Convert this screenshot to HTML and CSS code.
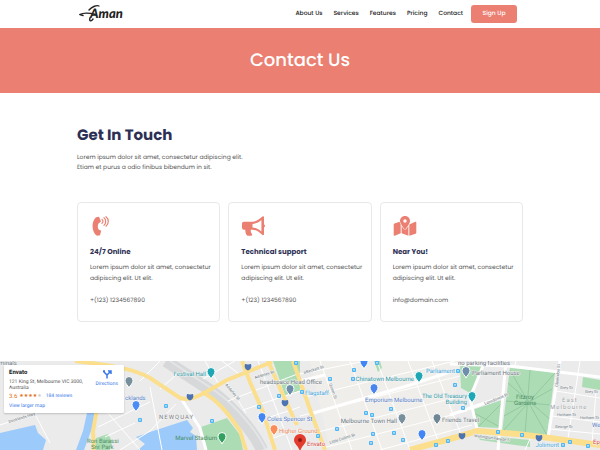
FILE: index.html
```html
<!DOCTYPE html>
<html lang="en">
<head>
    <meta charset="UTF-8">
    <meta name="viewport" content="width=device-width, initial-scale=1.0">
    <title>Contact Us</title>
    <link rel="stylesheet" href="styles.css">
</head>
<body>

<header class="site-header">
    <div class="container header-inner">
        <a class="logo" href="#">
            <svg width="46" height="20" viewBox="0 0 46 20" role="img" aria-label="Aman">
                <path d="M1 10.500C5 8 11 9 17 10.500" />
                <path d="M1 10.500 4 11.500" />
                <path d="M10 6C13 2.500 18 .8 20 2" />
                <path d="M11 14C10 17 12 18 14 15" />
                <text x="11" y="14">Aman</text>
            </svg>
        </a>
        <nav class="nav">
            <a href="#">About Us</a>
            <a href="#">Services</a>
            <a href="#">Features</a>
            <a href="#">Pricing</a>
            <a href="#">Contact</a>
        </nav>
        <button class="signup" type="button">Sign Up</button>
    </div>
</header>

<section class="banner">
    <h1>Contact Us</h1>
</section>

<main class="container content">
    <h2>Get In Touch</h2>
    <p class="intro">Lorem ipsum dolor sit amet, consectetur adipiscing elit.<br>Etiam et purus a odio finibus bibendum in sit.</p>

    <div class="cards">
        <article class="card">
            <svg class="icon" viewBox="0 0 24 20">
                <path d="M6 1.200 9 .8 11 5.500 8.500 7.500C7.500 9.500 7.600 11.500 8.600 13.400L11.200 14.800 10 19.200 7 19.800C1.500 16 1 5.500 6 1.200Z" />
                <path class="line" d="M12 3.500C13.300 4.300 13.300 6.300 12 7.300M14 1.700C16.200 3.200 16.200 7.500 14 9.200M16 .7C19 3 19 7.800 16 10.200" />
            </svg>
            <h3>24/7 Online</h3>
            <p>Lorem ipsum dolor sit amet, consectetur adipiscing elit. Ut elit.</p>
            <p>+(123) 1234567890</p>
        </article>
        <article class="card">
            <svg class="icon" viewBox="0 0 24 20">
                <path fill-rule="evenodd" d="M23 8.200V1.200C23 .3 22 .1 21.500 .5L17.500 3.600C15.700 5 13.500 5.700 11.300 5.700H3C1.800 5.700 1 6.600 1 7.700V11.700C1 12.900 1.900 13.700 3 13.700H4.300C4.200 15.600 4.600 17.500 5.600 19.100C5.900 19.600 6.300 19.800 6.800 19.800H10C11 19.800 11.400 18.700 10.900 18C9.800 16.700 9.500 15.200 9.900 13.700H11.300C13.500 13.700 15.700 14.400 17.500 15.800L21.500 19C22 19.400 23 19.100 23 18.300V11.400C24.300 10.600 24.300 9 23 8.200ZM20.400 15.500 19.200 14.500C17 12.700 14.200 11.700 11.500 11.600V7.900C14.200 7.800 17 6.700 19.200 5L20.400 4Z" />
            </svg>
            <h3>Technical support</h3>
            <p>Lorem ipsum dolor sit amet, consectetur adipiscing elit. Ut elit.</p>
            <p>+(123) 1234567890</p>
        </article>
        <article class="card">
            <svg class="icon" viewBox="0 0 24 20">
                <path fill-rule="evenodd" d="M12 0C14.900 0 17 2.200 17 5C17 7.300 14 11.200 12.600 12.900C12.300 13.300 11.700 13.300 11.400 12.900C10 11.200 7 7.300 7 5C7 2.200 9.100 0 12 0ZM12 3.300A1.700 1.700 0 1 0 12 6.700A1.700 1.700 0 1 0 12 3.300Z" />
                <path d="M.7 8.600C.7 8.200 1 7.800 1.400 7.600L6.600 5.700C6.800 6.600 7.200 7.600 7.700 8.500V17.200L1.700 19.700C1.200 19.900 .7 19.700 .7 19.100ZM8.600 10.100 10.500 12.800C11.300 13.900 12.700 13.900 13.500 12.800L15.400 10.100V19.700L8.600 17.300ZM22.300 5.700C22.800 5.500 23.300 5.800 23.300 6.300V16.800C23.300 17.200 23 17.600 22.600 17.800L16.300 19.800V8.500Z" />
            </svg>
            <h3>Near You!</h3>
            <p>Lorem ipsum dolor sit amet, consectetur adipiscing elit. Ut elit.</p>
            <p>info@domain.com</p>
        </article>
    </div>
</main>

<section class="map" aria-label="Map">
    <svg class="map-canvas" viewBox="0 0 600 89" preserveAspectRatio="xMidYMid slice">
        <defs>
            <path id="pin" d="M0 0C-1-3-4-4-4-7.500A4 4 0 1 1 4-7.500C4-4 1-3 0 0Z" />
            <g id="stop"><rect width="4" height="4" rx="1" fill="#4fb5f5" /><path d="M1.300 1.200H2.700V2.600H1.300Z" fill="#fff" /></g>
            <path id="shield" d="M-3-3 0-2.500 3-3C4 0 3 2.500 0 3.500C-3 2.500-4 0-3-3Z" fill="#4c74b4" />
        </defs>

        <!-- land -->
        <rect width="600" height="89" fill="#ebebeb" />
        <path d="M310 0H460L450 80 420 89H330Z" fill="#f0eeea" />

        <!-- water -->
        <g fill="#9ccafa">
            <path d="M0 72 35 64 38 72 46 79 43 89H0Z" />
            <path d="M136 76 150 71 187 59 193 67 190 71 196 75 197 89H138L145 83Z" />
            <path d="M87 52H97L91 70 84 89H76L83 70Z" />
        </g>

        <!-- parks -->
        <g fill="#acdcb4">
            <path d="M201 66 227 57 240 74 243 89H207Z" />
            <path d="M273 0H300V30L285 34Z" />
            <path d="M374 0H380L382 7 378 11Z" />
            <path d="M510 7 555 11 547 75 502 71Z" />
            <path d="M472 49 502 39 500 67 478 66Z" />
            <path d="M460 4 483 2 479 15 470 32 461 27Z" />
            <path d="M583 16 600 19V29L582 26Z" />
            <path d="M477 74 530 79V86L480 79Z" />
            <path d="M96 77 108 73 112 80 110 89H93Z" />
        </g>
        <g class="path-line">
            <path d="M510 9 547 74M555 12 503 70M506 40 551 44M530 9 525 73M508 22 552 60M552 28 504 55M474 52 500 66M502 42 479 65" />
        </g>

        <!-- railway -->
        <path d="M166 0C195 20 212 28 229 45S256 76 262 89" fill="none" stroke="#d6d8da" stroke-width="12" />
        <path d="M170 0C199 20 216 28 233 45S260 76 266 89" fill="none" stroke="#e3e4e6" stroke-width="2" />

        <!-- streets -->
        <g class="street">
            <path d="M0 64 46 49 77 43M36 55 50 82M98 66 150 41M120 89 150 70 176 43M108 52 140 89M140 20 160 0M105 76 135 62M150 26 162 89M176 14 160 28" />
            <path d="M203 18 235 0M205 0 218 22M226 20 246 52M228 40 300 12M243 49 300 30M258 60 300 46M270 78 300 68M222 0 238 12M258 0 292 89" />
            <path d="M300 13 365 0M305 36 455 0M300 55 460 15M318 71 462 35M323 87 467 50M380 89 472 64M320 0 352 89M350 0 382 89M377 0 410 89M408 0 440 85M432 0 462 76" />
            <path d="M556 30 600 37M552 55 600 61M550 68 600 73M580 0 568 77M596 30 592 83M530 78 525 89M516 0 514 7" />
        </g>
        <g class="avenue">
            <path d="M182 39 200 67 206 89M310 53 410 24 450 11M300 20 325 14M506 0 498 89M450 3 510 5 600 16M560 0 548 77M450 54 502 36M485 0 470 37 478 72" />
        </g>
        <g class="highway">
            <path d="M75 0C110 4 135 8 150 17L180 37C190 40 198 35 206 31L227 19 272 1" />
            <path d="M202 31C220 40 232 58 240 70L246 89M242 0 250 21 263 51 275 89M268 0 283 34 297 64M293 0 313 57 325 89M97 48 93 70 94 89" />
            <path d="M410 89 450 78 477 70 517 73 550 77 600 84" class="wide" />
        </g>

        <!-- transit stops -->
        <use href="#stop" x="138" y="57" /><use href="#stop" x="164" y="43" /><use href="#stop" x="210" y="58" />
        <use href="#stop" x="257" y="44" /><use href="#stop" x="277" y="33" /><use href="#stop" x="294" y="0" />
        <use href="#stop" x="328" y="16" /><use href="#stop" x="352" y="7" /><use href="#stop" x="351" y="16" />
        <use href="#stop" x="375" y="0" /><use href="#stop" x="364" y="50" /><use href="#stop" x="370" y="52" />
        <use href="#stop" x="389" y="46" /><use href="#stop" x="335" y="66" /><use href="#stop" x="316" y="73" />
        <use href="#stop" x="371" y="71" /><use href="#stop" x="369" y="80" /><use href="#stop" x="392" y="70" />
        <use href="#stop" x="401" y="77" /><use href="#stop" x="434" y="82" /><use href="#stop" x="446" y="78" />
        <use href="#stop" x="453" y="22" /><use href="#stop" x="461" y="45" /><use href="#stop" x="496" y="69" />
        <use href="#stop" x="520" y="72" /><use href="#stop" x="568" y="79" /><use href="#stop" x="586" y="83" />
        <use href="#stop" x="300" y="29" /><use href="#stop" x="456" y="8" /><use href="#stop" x="561" y="82" />

        <use href="#shield" x="190" y="36" /><use href="#shield" x="248" y="6" /><use href="#shield" x="285" y="42" />
        <use href="#shield" x="462" y="75" /><use href="#shield" x="539" y="77" />

        <!-- places -->
        <g class="pins">
            <use href="#pin" x="129" y="27" fill="#78909c" /><use href="#pin" x="136" y="51" fill="#4c8df5" />
            <use href="#pin" x="211" y="18" fill="#1fa7b5" /><use href="#pin" x="222" y="83" fill="#34a060" />
            <use href="#pin" x="290" y="35" fill="#6f8eab" /><use href="#pin" x="262" y="63" fill="#4285f4" />
            <use href="#pin" x="274" y="75" fill="#fb8c5a" /><use href="#pin" x="364" y="8" fill="#4285f4" />
            <use href="#pin" x="419" y="22" fill="#1fa7b5" /><use href="#pin" x="374" y="34" fill="#4c84ee" />
            <use href="#pin" x="402" y="64" fill="#78909c" /><use href="#pin" x="437" y="64" fill="#6f8794" />
            <use href="#pin" x="422" y="80" fill="#4285f4" /><use href="#pin" x="466" y="17" fill="#6f8eab" />
            <use href="#pin" x="472" y="42" fill="#1fa7b5" />
        </g>
        <path d="M300 91C299 85 294 83 294 79A5 5 0 1 1 306 79C306 83 301 85 300 91Z" fill="#e33b2e" />
        <circle cx="300" cy="79" r="2" fill="#8d1b14" />

        <!-- labels -->
        <g class="labels">
            <text x="-1" y="4">minals</text>
            <text x="125" y="39" class="blue">cklands</text>
            <text x="87" y="82" class="green">Ron Barassi</text>
            <text x="91" y="88" class="green">Snr Park</text>
            <text x="206" y="15" class="teal end">Festival Hall</text>
            <text x="159" y="58" class="area">NEWQUAY</text>
            <text x="217" y="79" class="green end">Marvel Stadium</text>
            <text x="260" y="23">headspace Head Office</text>
            <text x="267" y="60" class="blue">Coles Spencer St</text>
            <text x="279" y="72" class="orange">Higher Ground</text>
            <text x="307" y="85" class="red">Envato</text>
            <text x="305" y="34" class="sky">Flagstaff</text>
            <text x="414" y="20" class="teal end">Chinatown Melbourne</text>
            <text x="365" y="41" class="blue">Emporium Melbourne</text>
            <text x="397" y="62" class="end">Melbourne Town Hall</text>
            <text x="455" y="12" class="sky end">Parliament</text>
            <text x="458" y="4">no parking facilities</text>
            <text x="472" y="14">Parliament House</text>
            <text x="467" y="37" class="teal end">The Old Treasury</text>
            <text x="467" y="43" class="teal end">Building</text>
            <text x="442" y="61">Friends Travel</text>
            <text x="516" y="38" class="green">Fitzroy</text>
            <text x="514" y="44" class="green">Gardens</text>
            <text x="562" y="41" class="area light">East</text>
            <text x="550" y="48" class="area light">Melbourne</text>
            <text x="559" y="86" class="sky end">Jolimont</text>
            <text x="592" y="66" class="blue">We</text>
            <text x="593" y="83" class="red">Ep</text>
        </g>
        <g class="labels small">
            <text transform="translate(225 24) rotate(50)">Adderley St</text>
            <text transform="translate(255 18) rotate(-18)">Adderley St</text>
            <text transform="translate(304 13) rotate(-17)">a'Beckett St</text>
            <text transform="translate(329 23) rotate(70)">Queen St</text>
            <text transform="translate(330 83) rotate(-18)">Little Collins St</text>
            <text transform="translate(485 44) rotate(-22)">Lansdowne Pl</text>
            <text transform="translate(558 26) rotate(-85)">Clarendon St</text>
            <text transform="translate(474 76) rotate(7)">Wellington Parade S</text>
            <text x="560" y="28">Grey St</text>
            <text x="585" y="32">Grey St</text>
            <text x="557" y="55">Hotham St</text>
            <text x="580" y="58">Hotham St</text>
            <text x="555" y="67">George St</text>
            <text transform="translate(9 62) rotate(-17)">Docklands Hwy</text>
        </g>
    </svg>

    <div class="place-card">
        <div class="place-info">
            <strong>Envato</strong>
            <address>121 King St, Melbourne VIC 3000, Australia</address>
            <div class="rating">
                <span class="score">3.6</span>
                <span class="stars">★★★★<span class="star-off">★</span></span>
                <a href="#">184 reviews</a>
            </div>
            <a href="#">View larger map</a>
        </div>
        <a class="directions" href="#">
            <svg viewBox="0 0 10 10"><path d="M5 9.500V6L1.500 2.500M5 6 8.500 2.500M6 2H9V5M1 2H3" /></svg>
            Directions
        </a>
    </div>
</section>

</body>
</html>
```
FILE: styles.css
```css
* {
    box-sizing: border-box;
}
body {
    margin: 0;
    min-height: 100vh;
    display: flex;
    flex-direction: column;
    font-family: Poppins, Inter, sans-serif;
    font-size: 6px;
    text-rendering: geometricPrecision;
    color: #555;
    background-color: #fff;
}
h1, h2, h3, p {
    margin: 0;
}
a {
    color: inherit;
    text-decoration: none;
}
.container {
    width: 100%;
    max-width: 446px;
    margin: 0 auto;
}

/* Header */
.header-inner {
    display: flex;
    align-items: center;
    height: 28px;
    padding: 0 6px 0 2px;
}
.logo {
    display: flex;
    margin-right: auto;
}
.logo path {
    fill: none;
    stroke: #222;
    stroke-width: 1.4;
    stroke-linecap: round;
}
.logo text {
    font: italic 900 13px Lato, sans-serif;
    fill: #222;
}
.nav {
    display: flex;
    gap: 11px;
    font-weight: 500;
    color: #222;
}
.signup {
    width: 46px;
    height: 18px;
    margin-left: 8px;
    padding: 0;
    border: 0;
    border-radius: 3px;
    background-color: #eb8072;
    color: #fff;
    font-family: inherit;
    font-size: 6px;
    font-weight: 500;
    text-rendering: inherit;
}

/* Banner */
.banner {
    padding: 20px;
    background-color: #eb8072;
    text-align: center;
}
.banner h1 {
    color: #fff;
    font-size: 18px;
    font-weight: 500;
    line-height: 25px;
}

/* Content */
.content {
    padding: 33px 0 39px;
}
.content h2 {
    color: #2d3054;
    font-size: 15px;
    font-weight: 700;
    line-height: 20px;
}
.intro {
    margin-top: 7px;
    line-height: 10px;
}
.cards {
    display: grid;
    grid-template-columns: repeat(3, 1fr);
    gap: 8px;
    margin-top: 29px;
}
.card {
    padding: 13px 8px 14px 12px;
    border: 1px solid #e8e8ea;
    border-radius: 4px;
}
.icon {
    display: block;
    width: 24px;
    height: 20px;
    fill: #eb8072;
}
.icon .line {
    fill: none;
    stroke: #eb8072;
    stroke-width: 1.2;
    stroke-linecap: round;
}
.card h3 {
    margin: 12px 0 5px;
    color: #2d3054;
    font-size: 7px;
    font-weight: 700;
    line-height: 10px;
}
.card p {
    line-height: 11px;
}
.card p + p {
    margin-top: 11px;
}

/* Map */
.map {
    position: relative;
    flex: 1;
    min-height: 88px;
    overflow: hidden;
    font-family: Roboto, sans-serif;
}
.map-canvas {
    position: absolute;
    width: 100%;
    height: 100%;
}
.street, .avenue, .highway, .path-line {
    fill: none;
    stroke: #fff;
    stroke-width: 1;
}
.avenue {
    stroke-width: 3;
}
.highway {
    stroke: #fbdf8d;
    stroke-width: 4;
}
.highway .wide {
    stroke-width: 6;
}
.path-line {
    stroke: #94c9a0;
}
.pins {
    stroke: #fff;
    stroke-width: 1;
}
.labels {
    font-size: 6px;
    fill: #6b7780;
    stroke: #f5f5f5;
    stroke-width: 1;
    paint-order: stroke;
}
.labels.small {
    font-size: 4px;
}
.labels .end { text-anchor: end; }
.labels .teal { fill: #2f98a6; }
.labels .blue { fill: #5580c8; }
.labels .sky { fill: #3ea6dc; }
.labels .green { fill: #4a8c65; stroke: none; }
.labels .orange { fill: #ee8a5c; }
.labels .red { fill: #d9453b; }
.labels .area { fill: #7b8084; letter-spacing: 1px; }
.labels .light { fill: #a0a4a8; }

/* Place card over the map */
.place-card {
    position: absolute;
    top: 4px;
    left: 4px;
    display: flex;
    justify-content: space-between;
    width: 120px;
    padding: 4px 6px 4px 5px;
    border-radius: 1px;
    background-color: #fff;
    box-shadow: 0 1px 2px rgba(0, 0, 0, 0.2);
    font-size: 5px;
    line-height: 6px;
    color: #555;
}
.place-card a {
    color: #3b78e7;
}
.place-info {
    width: 76px;
}
.place-info strong {
    display: block;
    margin-bottom: 2px;
    color: #111;
    font-size: 6px;
    line-height: 8px;
}
.place-info address {
    font-style: normal;
}
.rating {
    display: flex;
    gap: 2px;
    margin: 2px 0 3px;
    line-height: 7px;
}
.score, .stars {
    color: #e7711b;
}
.score {
    font-size: 6px;
}
.stars {
    margin-right: 2px;
}
.star-off {
    color: #ccc;
}
.directions {
    display: flex;
    flex-direction: column;
    align-items: center;
    gap: 2px;
}
.directions svg {
    width: 10px;
    height: 10px;
    fill: none;
    stroke: #3b78e7;
    stroke-width: 1.5;
}
```
